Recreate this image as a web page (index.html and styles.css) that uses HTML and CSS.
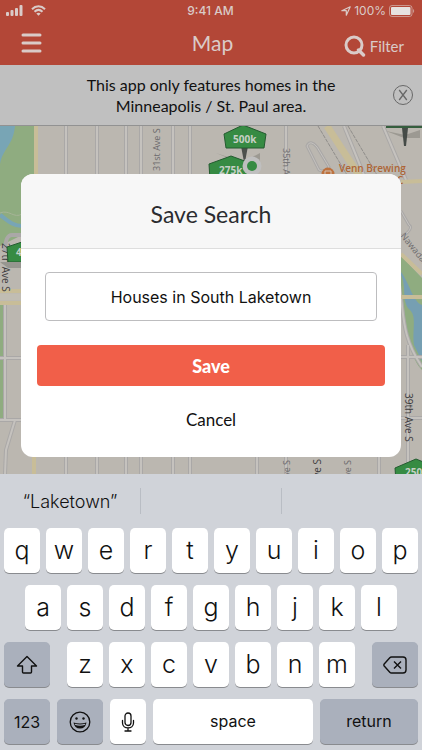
FILE: index.html
```
<!DOCTYPE html>
<html lang="en">
<head>
  <meta charset="UTF-8" />
  <meta name="viewport" content="width=device-width, initial-scale=1" />
  <title>Map - Save Search</title>
  <link rel="stylesheet" href="styles.css">
</head>
<body>
  <div class="screen">
    <header class="header">
      <div class="status">
        <div class="status-left">
          <svg width="17" height="11" viewBox="0 0 17 11" fill="currentColor" aria-hidden="true">
            <rect x="0" y="7" width="3" height="4" rx="1" />
            <rect x="4.5" y="5" width="3" height="6" rx="1" />
            <rect x="9" y="3" width="3" height="8" rx="1" />
            <rect x="13.5" y="0" width="3" height="11" rx="1" />
          </svg>
          <svg width="15" height="11" viewBox="0 0 15 11" fill="none" stroke="currentColor" stroke-width="2" aria-hidden="true">
            <path d="M1 4.2C4.7 0.4 10.3 0.4 14 4.2" />
            <path d="M3.5 6.8C5.9 4.5 9.1 4.5 11.5 6.8" />
            <path d="M7.5 10.8L5.3 8.5C6.6 7.4 8.4 7.4 9.7 8.5Z" fill="currentColor" stroke="none" />
          </svg>
        </div>
        <div class="time">9:41 AM</div>
        <div class="status-right">
          <svg width="10" height="10" viewBox="0 0 10 10" fill="none" stroke="currentColor" stroke-width="1.2" stroke-linejoin="round" aria-hidden="true">
            <path d="M9.2 0.8L5.3 9.2V4.7H0.8Z" />
          </svg>
          <span>100%</span>
          <svg width="26" height="12" viewBox="0 0 26 12" aria-hidden="true">
            <rect x="0.5" y="0.5" width="22.5" height="11" rx="2.5" fill="none" stroke="currentColor" stroke-opacity="0.6" />
            <rect x="2" y="2" width="19.5" height="8" rx="1" fill="#e6e2e1" />
            <path d="M24 4C25.6 4.6 25.6 7.4 24 8Z" fill="currentColor" fill-opacity="0.6" />
          </svg>
        </div>
      </div>
      <nav class="nav">
        <button class="menu" aria-label="Menu">
          <svg width="21" height="20" viewBox="0 0 21 20" stroke="currentColor" stroke-width="3" stroke-linecap="round">
            <path d="M2 2H19M2 10H19M2 18H19" />
          </svg>
        </button>
        <h1 class="nav-title">Map</h1>
        <button class="filter">
          <svg width="22" height="22" viewBox="0 0 22 22" fill="none" stroke="currentColor" stroke-width="3" aria-hidden="true">
            <circle cx="10" cy="10" r="8" />
            <path d="M14.5 15L19.5 20" stroke-width="3.4" stroke-linecap="round" />
          </svg>
          Filter
        </button>
      </nav>
    </header>

    <div class="notice">
      <p>This app only features homes in the Minneapolis / St. Paul area.</p>
      <button class="dismiss" aria-label="Dismiss">
        <svg width="22" height="22" viewBox="0 0 22 22" fill="none" stroke="currentColor" aria-hidden="true">
          <circle cx="11" cy="11" r="9.5" />
          <path d="M7.2 6L14.8 16M14.8 6L7.2 16" stroke-width="1.3" />
        </svg>
      </button>
    </div>

    <main class="map">
      <svg class="map-art" viewBox="0 126 422 348" preserveAspectRatio="xMidYMid slice">
        <rect y="126" width="422" height="348" fill="#bbb7b0" />

        <!-- parks and water -->
        <path d="M0 126H34V236H20L0 246Z" fill="#8fac80" />
        <path d="M0 126H15C13 146 3 148 0 164Z" fill="#78a5b5" />
        <path d="M0 215C7 220 13 226 22 226" fill="none" stroke="#78a5b5" stroke-width="4" />
        <path d="M0 213C9 209 14 219 22 214" fill="none" stroke="#a6b497" />
        <path d="M0 304H4V418H0Z" fill="#8fac80" />
        <path d="M401 256L422 278V370C411 359 408 338 405 318L401 285Z" fill="#8fac80" />
        <path d="M401 275C407 287 401 302 410 310C417 317 412 330 414 345L422 361V305C413 302 409 282 401 272Z" fill="#769fb2" />

        <!-- streets -->
        <g fill="none" stroke="#aaa8a7" stroke-width="4">
          <path d="M66 126V474M97 126V474M126 126V474M141 126V474M173 126V474M190 126V474M286 126V474" />
          <path d="M344 126L366 180M383 126L406 180M5 304V420M0 358H22M0 420H22M15 420L6 450L5 474" />
          <path d="M401 357H422M401 418H422M408 345V474M379 457V474M257 457V474M401 298C404 322 404 340 422 367M22 235H12C7 235 5 240 5 252" />
          <path d="M307 146L319 170Q324 173 329 167L317 147Q310 139 307 146ZM401 211L409 225Q413 227 407 233L401 236" stroke-width="3" />
        </g>
        <g fill="none" stroke="#c5c2be" stroke-width="2">
          <path d="M66 126V474M97 126V474M126 126V474M141 126V474M173 126V474M190 126V474M286 126V474" />
          <path d="M344 126L366 180M383 126L406 180M5 304V420M0 358H22M0 420H22M15 420L6 450L5 474" />
          <path d="M401 357H422M401 418H422M408 345V474M379 457V474M257 457V474M401 298C404 322 404 340 422 367" />
          <path d="M307 146L319 170Q324 173 329 167L317 147Q310 139 307 146ZM401 211L409 225Q413 227 407 233L401 236" stroke-width="1" />
        </g>
        <g fill="none" stroke="#c8bd98" stroke-width="4">
          <path d="M36 126V180M34 457V474M0 291H22M0 303H22M401 182L422 181M401 297H422M401 254L422 274" />
          <path d="M327 126L362 180" stroke-width="7" />
        </g>
        <path d="M0 297H22" fill="none" stroke="#c1bdb3" stroke-width="7" />
        <path d="M318 126L350 180M348 126L380 180" fill="none" stroke="#8f8d8a" stroke-dasharray="4 1" />

        <!-- street names -->
        <g class="street">
          <text transform="translate(160 171) rotate(-90)">31st Ave S</text>
          <text transform="translate(283 148) rotate(90)">35th Ave S</text>
          <text class="dark" transform="translate(2 243) rotate(90)">27th Ave S</text>
          <text class="dark" transform="translate(405 393) rotate(90)">39th Ave S</text>
          <text class="end" transform="translate(290 460) rotate(-90)">Ave S</text>
          <text class="end dark" transform="translate(321 459) rotate(-90)">Ave S</text>
          <text class="end" transform="translate(351 460) rotate(-90)">Ave S</text>
          <text transform="translate(400 236) rotate(51)">Nawadaha</text>
        </g>
        <circle cx="328" cy="174" r="6.5" fill="#bd723f" />
        <path d="M325 171H331V175Q328 178 325 175ZM324 177H332" fill="none" stroke="#d2c2b4" />
        <text class="place" x="339" y="172">Venn Brewing</text>
        <text class="place" x="397" y="184">C</text>

        <!-- price signs -->
        <path d="M216 153L243 162L260 153V163H243L228 158Z" fill="#9c9992" />
        <path d="M241 146H248L245 162H244Z" fill="#4d504d" />
        <path d="M224 134L243 125L266 134L264 148H226Z" fill="#368b43" stroke="#245b30" />
        <text class="price" x="233" y="143">500k</text>
        <path d="M209 164L231 156L253 164V180H210Z" fill="#368b43" stroke="#245b30" />
        <text class="price" x="219" y="174">275k</text>
        <circle cx="252" cy="166" r="9.5" fill="#bfbfbf" />
        <circle cx="252" cy="166" r="5" fill="#368b43" />
        <path d="M386 131L404 138H420V130L405 135Z" fill="#9c9992" />
        <path d="M386 126H422V128H386Z" fill="#355e3e" />
        <path d="M402 128H408L406 146H404Z" fill="#454b47" />
        <path d="M7 247L22 242V262H8Z" fill="#368b43" stroke="#245b30" />
        <path d="M0 262H22V268H8Z" fill="#979690" />
        <text class="price" x="16" y="256">450k</text>
        <path d="M395 468L416 459L438 468V482H396Z" fill="#368b43" stroke="#245b30" />
        <text class="price" x="405" y="476">250k</text>
      </svg>
    </main>

    <div class="overlay">
      <form class="modal" role="dialog" aria-labelledby="modalTitle">
        <h2 class="modal-title" id="modalTitle">Save Search</h2>
        <div class="modal-body">
          <input class="search-name" type="text" aria-label="Search name" value="Houses in South Laketown" />
          <button class="save" type="submit">Save</button>
          <button class="cancel" type="button">Cancel</button>
        </div>
      </form>
    </div>
  </div>

  <div class="keyboard">
    <div class="suggestions">
      <button class="suggestion">“Laketown”</button>
      <button class="suggestion" aria-label="Empty suggestion"></button>
      <button class="suggestion" aria-label="Empty suggestion"></button>
    </div>
    <div class="keys">
      <div class="key-row">
        <button class="key">q</button>
        <button class="key">w</button>
        <button class="key">e</button>
        <button class="key">r</button>
        <button class="key">t</button>
        <button class="key">y</button>
        <button class="key">u</button>
        <button class="key">i</button>
        <button class="key">o</button>
        <button class="key">p</button>
      </div>
      <div class="key-row inset">
        <button class="key">a</button>
        <button class="key">s</button>
        <button class="key">d</button>
        <button class="key">f</button>
        <button class="key">g</button>
        <button class="key">h</button>
        <button class="key">j</button>
        <button class="key">k</button>
        <button class="key">l</button>
      </div>
      <div class="key-row">
        <button class="key side shift" aria-label="Shift">
          <svg width="22" height="20" viewBox="0 0 22 20" fill="none" stroke="currentColor" stroke-width="1.4" stroke-linejoin="round">
            <path d="M11 1.5L20.5 11H15.5V17Q15.5 18 14.5 18H7.5Q6.5 18 6.5 17V11H1.5Z" />
          </svg>
        </button>
        <button class="key">z</button>
        <button class="key">x</button>
        <button class="key">c</button>
        <button class="key">v</button>
        <button class="key">b</button>
        <button class="key">n</button>
        <button class="key">m</button>
        <button class="key side delete" aria-label="Delete">
          <svg width="24" height="18" viewBox="0 0 24 18" fill="none" stroke="currentColor" stroke-width="1.4" stroke-linejoin="round">
            <path d="M8.5 1H20Q23 1 23 4V14Q23 17 20 17H8.5Q7.5 17 6.8 16.2L1.2 10Q0.5 9 1.2 8L6.8 1.8Q7.5 1 8.5 1Z" />
            <path d="M11 5.5L18 12.5M18 5.5L11 12.5" />
          </svg>
        </button>
      </div>
      <div class="key-row bottom">
        <button class="key side word">123</button>
        <button class="key side" aria-label="Emoji">
          <svg width="22" height="22" viewBox="0 0 22 22" fill="none" stroke="currentColor" stroke-width="1.3">
            <circle cx="11" cy="11" r="9.8" />
            <circle cx="7.5" cy="7.5" r="1.2" fill="currentColor" stroke="none" />
            <circle cx="14.5" cy="7.5" r="1.2" fill="currentColor" stroke="none" />
            <path d="M4.5 11.5Q11 13.5 17.5 11.5Q16.5 17.5 11 17.5Q5.5 17.5 4.5 11.5Z" fill="currentColor" stroke="none" />
            <path d="M5.8 13.3Q11 15 16.2 13.3" stroke="#aab0bc" stroke-width="1.2" />
          </svg>
        </button>
        <button class="key mic" aria-label="Dictate">
          <svg width="14" height="20" viewBox="0 0 14 20" fill="none" stroke="currentColor" stroke-width="1.3" stroke-linecap="round">
            <rect x="4" y="1" width="6" height="12.5" rx="3" />
            <path d="M1.5 8.5V11C1.5 17.5 12.5 17.5 12.5 11V8.5M7 16V19M4 19H10" />
          </svg>
        </button>
        <button class="key word">space</button>
        <button class="key word return">return</button>
      </div>
    </div>
  </div>
</body>
</html>
```
FILE: styles.css
```
* {
  box-sizing: border-box;
}
body {
  margin: 0;
  min-height: 100vh;
  display: flex;
  flex-direction: column;
  font-family: Lato, sans-serif;
  color: #111;
  background: #d0d3d9;
}
button {
  margin: 0;
  padding: 0;
  border: none;
  background: none;
  color: inherit;
  font: inherit;
  cursor: pointer;
}
svg {
  display: block;
}
.screen {
  position: relative;
  flex: 1;
  display: flex;
  flex-direction: column;
}

/* header */
.header {
  background: #b34737;
  color: #dacbc8;
}
.status {
  display: grid;
  grid-template-columns: 1fr auto 1fr;
  align-items: center;
  height: 21px;
  padding: 0 7px 0 6px;
  font-family: Inter, sans-serif;
  font-size: 12px;
}
.status-left {
  display: flex;
  gap: 8px;
}
.time {
  font-weight: 500;
}
.status-right {
  display: flex;
  align-items: center;
  justify-content: flex-end;
  gap: 3px;
}
.nav {
  display: grid;
  grid-template-columns: 1fr auto 1fr;
  align-items: center;
  height: 44px;
  padding: 0 18px 0 21px;
}
.menu {
  justify-self: start;
}
.nav-title {
  margin: 0;
  padding-bottom: 2px;
  font-size: 21px;
  font-weight: 400;
}
.filter {
  justify-self: end;
  display: flex;
  align-items: center;
  gap: 4px;
  padding-top: 5px;
  font-size: 15px;
}

/* notice */
.notice {
  display: flex;
  align-items: center;
  justify-content: space-between;
  padding: 9px 8px 9px 30px;
  background: #c0c0c0;
  border-bottom: 1px solid #929292;
}
.notice p {
  flex: 1;
  max-width: 260px;
  margin: 0 auto;
  font-size: 16px;
  line-height: 21px;
  text-align: center;
}
.dismiss {
  color: #686868;
}

/* map */
.map {
  position: relative;
  flex: 1;
  min-height: 340px;
  overflow: hidden;
}
.map-art {
  position: absolute;
  inset: 0;
  width: 100%;
  height: 100%;
  font-family: "Open Sans", sans-serif;
}
.street {
  font-size: 9px;
  fill: #6b6a6c;
}
.street .dark {
  font-size: 10px;
  fill: #3c3b3d;
}
.street .end {
  text-anchor: end;
}
.place {
  font-size: 10px;
  font-weight: 600;
  fill: #ae6535;
}
.price {
  font-size: 10px;
  font-weight: 700;
  fill: #c6d0c6;
}

/* save dialog */
.overlay {
  position: absolute;
  inset: 0;
  display: flex;
  align-items: flex-end;
  padding: 0 21px 17px;
}
.modal {
  width: 100%;
  background: white;
  border-radius: 12px;
  overflow: hidden;
}
.modal-title {
  margin: 0;
  padding: 26px 0 20px;
  background: #f7f7f7;
  border-bottom: 1px solid #dedede;
  color: #2b2c30;
  font-size: 23px;
  font-weight: 400;
  line-height: 28px;
  text-align: center;
}
.modal-body {
  display: flex;
  flex-direction: column;
  padding: 23px 16px 26px;
}
.search-name {
  height: 49px;
  margin: 0 8px 24px;
  padding: 0 8px;
  border: 1px solid #bdbdbf;
  border-radius: 4px;
  background: white;
  color: #111;
  font-family: Inter, sans-serif;
  font-size: 16px;
  text-align: center;
  outline: none;
}
.save {
  height: 41px;
  border-radius: 4px;
  background: #f15f49;
  color: white;
  font-size: 18px;
  font-weight: 900;
}
.cancel {
  align-self: center;
  margin-top: 23px;
  font-size: 17px;
  line-height: 22px;
}

/* keyboard */
.keyboard {
  background: #d0d3d9;
  font-family: Inter, sans-serif;
}
.suggestions {
  display: flex;
  align-items: center;
  height: 54px;
}
.suggestion {
  flex: 1;
  height: 26px;
  font-size: 18px;
  font-weight: 300;
}
.suggestion + .suggestion {
  border-left: 1px solid #b9bdc4;
}
.keys {
  display: flex;
  flex-direction: column;
  gap: 12px;
  padding: 0 4px 6px;
}
.key-row {
  display: flex;
  gap: 6px;
}
.key-row.inset {
  padding: 0 21px;
}
.key-row.bottom {
  gap: 7px;
}
.key {
  flex: 1;
  display: flex;
  align-items: center;
  justify-content: center;
  height: 45px;
  padding-bottom: 2px;
  border-radius: 5px;
  background: white;
  box-shadow: 0 1px 0 #898b8f;
  font-size: 25px;
  font-weight: 300;
}
.side {
  flex: 0 0 46px;
  padding-bottom: 0;
  background: #aab0bc;
}
.shift {
  margin-right: 11px;
}
.delete {
  margin-left: 11px;
}
.mic {
  flex: 0 0 36px;
  padding-bottom: 0;
}
.word {
  font-size: 16px;
  font-weight: 400;
}
.return {
  flex: 0 0 98px;
  background: #aab0bc;
}
```
